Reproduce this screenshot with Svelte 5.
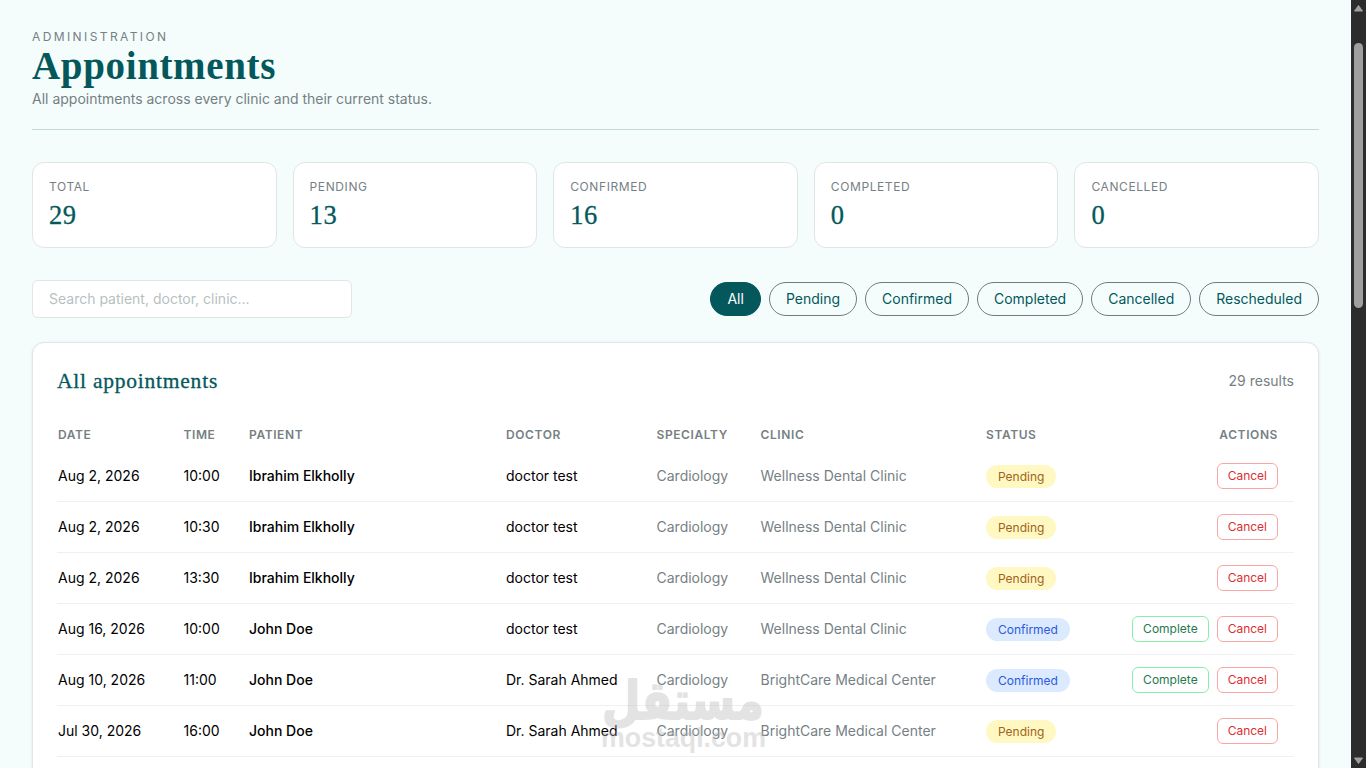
<script>
  const stats = [
    { label: 'Total', value: 29 },
    { label: 'Pending', value: 13 },
    { label: 'Confirmed', value: 16 },
    { label: 'Completed', value: 0 },
    { label: 'Cancelled', value: 0 }
  ];

  const filters = ['All', 'Pending', 'Confirmed', 'Completed', 'Cancelled', 'Rescheduled'];

  const appointments = [
    { date: 'Aug 2, 2026', time: '10:00', patient: 'Ibrahim Elkholly', doctor: 'doctor test', clinic: 'Wellness Dental Clinic', status: 'Pending' },
    { date: 'Aug 2, 2026', time: '10:30', patient: 'Ibrahim Elkholly', doctor: 'doctor test', clinic: 'Wellness Dental Clinic', status: 'Pending' },
    { date: 'Aug 2, 2026', time: '13:30', patient: 'Ibrahim Elkholly', doctor: 'doctor test', clinic: 'Wellness Dental Clinic', status: 'Pending' },
    { date: 'Aug 16, 2026', time: '10:00', patient: 'John Doe', doctor: 'doctor test', clinic: 'Wellness Dental Clinic', status: 'Confirmed' },
    { date: 'Aug 10, 2026', time: '11:00', patient: 'John Doe', doctor: 'Dr. Sarah Ahmed', clinic: 'BrightCare Medical Center', status: 'Confirmed' },
    { date: 'Jul 30, 2026', time: '16:00', patient: 'John Doe', doctor: 'Dr. Sarah Ahmed', clinic: 'BrightCare Medical Center', status: 'Pending' }
  ];

  let active = $state('All');
  let search = $state('');
</script>

<div class="screen">
  <main class="page">
    <header class="header">
      <p class="eyebrow">Administration</p>
      <h1>Appointments</h1>
      <p class="subtitle">All appointments across every clinic and their current status.</p>
    </header>

    <section class="stats">
      {#each stats as stat}
        <div class="stat">
          <div class="stat-label">{stat.label}</div>
          <div class="stat-value">{stat.value}</div>
        </div>
      {/each}
    </section>

    <div class="toolbar">
      <input class="search" type="text" placeholder="Search patient, doctor, clinic..." bind:value={search} />
      <div class="filters">
        {#each filters as filter}
          <button class="filter" class:active={active === filter} onclick={() => (active = filter)}>{filter}</button>
        {/each}
      </div>
    </div>

    <section class="panel">
      <div class="panel-head">
        <h2>All appointments</h2>
        <span class="results">29 results</span>
      </div>

      <table>
        <colgroup>
          <col class="c-date" /><col class="c-time" /><col class="c-patient" /><col class="c-doctor" />
          <col class="c-specialty" /><col class="c-clinic" /><col class="c-status" /><col />
        </colgroup>
        <thead>
          <tr>
            <th>Date</th>
            <th>Time</th>
            <th>Patient</th>
            <th>Doctor</th>
            <th>Specialty</th>
            <th>Clinic</th>
            <th>Status</th>
            <th class="right">Actions</th>
          </tr>
        </thead>
        <tbody>
          {#each appointments as a}
            <tr>
              <td>{a.date}</td>
              <td>{a.time}</td>
              <td class="patient">{a.patient}</td>
              <td>{a.doctor}</td>
              <td class="muted">Cardiology</td>
              <td class="muted">{a.clinic}</td>
              <td><span class="badge {a.status.toLowerCase()}">{a.status}</span></td>
              <td>
                <div class="actions">
                  {#if a.status === 'Confirmed'}
                    <button class="action complete">Complete</button>
                  {/if}
                  <button class="action cancel">Cancel</button>
                </div>
              </td>
            </tr>
          {/each}
        </tbody>
      </table>
    </section>
  </main>

  <div class="scrollbar">
    <svg width="15" height="17" viewBox="0 0 15 17"><path d="M7.5 5.5 11.5 11h-8z" /></svg>
    <div class="thumb"></div>
    <svg class="down" width="15" height="17" viewBox="0 0 15 17"><path d="M7.5 12.5 11.5 7h-8z" /></svg>
  </div>

  <svg class="watermark" width="180" height="98" viewBox="0 0 180 98">
    <text class="wm-ar" x="9" y="49" textLength="162" lengthAdjust="spacingAndGlyphs">مستقل</text>
    <text class="wm-en" x="8" y="77" textLength="165" lengthAdjust="spacingAndGlyphs">mostaql.com</text>
  </svg>
</div>

<style>
  :global(body) {
    margin: 0;
    overflow: hidden;
    background: #f4fdfc;
  }

  .screen {
    position: relative;
    display: flex;
    width: 1366px;
    height: 768px;
    overflow: hidden;
    background: #f4fdfc;
    font-family: Inter, sans-serif;
    font-size: 14px;
    line-height: 20px;
    color: #000;
  }

  .page {
    flex: 1;
    min-width: 0;
    padding: 28px 32px 0;
  }

  h1, h2, p {
    margin: 0;
  }

  button, input {
    font-family: inherit;
    box-sizing: border-box;
  }

  .header {
    height: 101px;
    border-bottom: 1px solid #c7d8d8;
  }

  .eyebrow {
    font-size: 12px;
    line-height: 17px;
    letter-spacing: 2.4px;
    text-transform: uppercase;
    color: #767f84;
  }

  h1 {
    font-family: "Liberation Serif", serif;
    font-size: 39px;
    line-height: 42px;
    height: 44px;
    font-weight: 700;
    letter-spacing: 0.65px;
    color: #04585c;
  }

  .subtitle {
    color: #767f84;
  }

  .stats {
    display: grid;
    grid-template-columns: repeat(5, 1fr);
    gap: 16px;
    margin-top: 32px;
  }

  .stat {
    box-sizing: border-box;
    height: 86px;
    padding: 16px;
    border: 1px solid #e0e5e5;
    border-radius: 12px;
    background: #fff;
  }

  .stat-label {
    font-size: 12px;
    line-height: 16px;
    letter-spacing: 0.6px;
    text-transform: uppercase;
    color: #767f84;
  }

  .stat-value {
    margin-top: 4px;
    font-family: "Liberation Serif", serif;
    font-size: 26.5px;
    line-height: 32px;
    letter-spacing: 0.6px;
    color: #04585c;
    -webkit-text-stroke: 0.3px #04585c;
  }

  .toolbar {
    display: flex;
    align-items: center;
    justify-content: space-between;
    margin-top: 32px;
  }

  .search {
    width: 320px;
    height: 38px;
    padding: 0 16px 2px;
    border: 1px solid #e0e5e5;
    border-radius: 6px;
    background: #fff;
    font-size: 14px;
    outline: none;
  }

  .search::placeholder {
    color: #b8bfc1;
    opacity: 1;
  }

  .filters {
    display: flex;
    gap: 8px;
  }

  .filter {
    height: 34px;
    padding: 0 16px 2px;
    border: 1px solid #717b80;
    border-radius: 17px;
    background: transparent;
    font-size: 14px;
    color: #04585c;
  }

  .filter.active {
    border-color: #04585c;
    background: #04585c;
    color: #fff;
  }

  .panel {
    height: 500px;
    margin-top: 24px;
    padding: 24px;
    border: 1px solid #e0e5e5;
    border-radius: 12px;
    background: #fff;
    box-shadow: 0 1px 3px rgba(0, 0, 0, 0.1);
  }

  .panel-head {
    display: flex;
    align-items: center;
    justify-content: space-between;
    height: 28px;
    margin-bottom: 24px;
  }

  h2 {
    font-family: "Liberation Serif", serif;
    font-size: 21.5px;
    font-weight: 400;
    letter-spacing: 0.77px;
    color: #04585c;
    -webkit-text-stroke: 0.3px #04585c;
  }

  .results, .muted {
    color: #767f84;
  }

  table {
    width: 100%;
    table-layout: fixed;
    border-spacing: 0;
  }

  .c-date { width: 125.5px; }
  .c-time { width: 65.5px; }
  .c-patient { width: 257px; }
  .c-doctor { width: 150.5px; }
  .c-specialty { width: 104px; }
  .c-clinic { width: 225.5px; }
  .c-status { width: 120px; }

  th {
    height: 32px;
    padding: 0 0 0 1px;
    text-align: left;
    font-size: 12px;
    font-weight: 600;
    line-height: 16px;
    letter-spacing: 0.6px;
    text-transform: uppercase;
    color: #767f84;
  }

  th.right {
    padding-right: 16px;
    text-align: right;
  }

  td {
    height: 50px;
    padding: 0 0 0 1px;
    border-bottom: 1px solid #eff0f1;
    white-space: nowrap;
  }

  .patient {
    font-weight: 500;
  }

  .badge {
    display: inline-block;
    padding: 4px 12px 3px;
    border-radius: 12px;
    font-size: 12px;
    line-height: 16px;
    vertical-align: middle;
  }

  .badge.pending {
    background: #fff8c2;
    color: #a0631a;
  }

  .badge.confirmed {
    background: #dbeafe;
    color: #2b59df;
  }

  .actions {
    display: flex;
    justify-content: flex-end;
    gap: 8px;
    padding-right: 16px;
  }

  .action {
    height: 26px;
    padding: 0 10px;
    border: 1px solid;
    border-radius: 6px;
    background: #fff;
    font-size: 12px;
    line-height: 16px;
  }

  .action.cancel {
    border-color: #fca5a5;
    color: #dc2f2f;
  }

  .action.complete {
    border-color: #86efac;
    color: #267a51;
  }

  .scrollbar {
    display: flex;
    flex-direction: column;
    align-items: center;
    width: 15px;
    background: #2c2c2c;
  }

  .scrollbar svg {
    display: block;
    fill: #9f9f9f;
    stroke: #9f9f9f;
    stroke-width: 1;
    stroke-linejoin: round;
  }

  .thumb {
    width: 9px;
    height: 265px;
    margin-top: 26px;
    border-radius: 5px;
    background: #9f9f9f;
  }

  .down {
    margin-top: auto;
  }

  .watermark {
    position: absolute;
    left: 593px;
    top: 670px;
    overflow: visible;
    opacity: 0.38;
    pointer-events: none;
    fill: #b8b8b8;
  }

  .wm-ar {
    font-family: "DejaVu Sans", sans-serif;
    font-size: 53px;
    font-weight: 700;
    stroke: #b8b8b8;
    stroke-width: 2;
    stroke-linejoin: round;
  }

  .wm-en {
    font-family: "Liberation Sans", sans-serif;
    font-size: 28px;
    font-weight: 700;
  }
</style>
